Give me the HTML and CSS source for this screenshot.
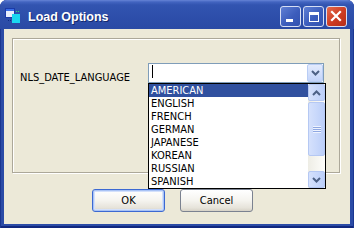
FILE: index.html
```html
<!DOCTYPE html>
<html lang="en">
<head>
    <meta charset="UTF-8">
    <title>Load Options</title>
    <link rel="stylesheet" href="styles.css">
</head>
<body>
    <div class="window">
        <div class="titlebar">
            <svg class="app-icon" width="16" height="16" viewBox="0 0 16 16">
                <rect x="0.5" y="0.5" width="9" height="9" fill="#e8eefc" stroke="#1b3aa8"/>
                <rect x="1" y="1" width="8" height="2" fill="#3a6fe8"/>
                <rect x="7" y="6" width="8" height="9" fill="#1ad8f0"/>
                <rect x="11" y="3" width="1" height="1" fill="#2ee06a"/>
                <rect x="13" y="3" width="1" height="1" fill="#2ee06a"/>
                <rect x="3" y="12" width="1" height="1" fill="#0b2a80"/>
                <rect x="5" y="12" width="1" height="1" fill="#0b2a80"/>
            </svg>
            <span class="title">Load Options</span>
            <div class="caption-buttons">
                <span class="cap min"><i></i></span>
                <span class="cap max"><i></i></span>
                <span class="cap close">
                    <svg width="21" height="21" viewBox="0 0 21 21">
                        <path d="M6 6 L14 14 M14 6 L6 14" stroke="#fff" stroke-width="2.2" stroke-linecap="square"/>
                    </svg>
                </span>
            </div>
        </div>
        <div class="client">
            <div class="group">
                <div class="field-row">
                    <label class="field-label">NLS_DATE_LANGUAGE</label>
                    <div class="combo">
                        <span class="caret"></span>
                        <span class="drop-btn">
                            <svg width="9" height="6" viewBox="0 0 9 6"><polyline points="1,1 4.5,4.5 8,1" fill="none" stroke="#4d6185" stroke-width="2"/></svg>
                        </span>
                        <div class="dropdown">
                            <ul class="options">
                                <li class="selected">AMERICAN</li>
                                <li>ENGLISH</li>
                                <li>FRENCH</li>
                                <li>GERMAN</li>
                                <li>JAPANESE</li>
                                <li>KOREAN</li>
                                <li>RUSSIAN</li>
                                <li>SPANISH</li>
                            </ul>
                            <div class="scrollbar">
                                <span class="sb-btn">
                                    <svg width="9" height="6" viewBox="0 0 9 6"><polyline points="1,5 4.5,1.5 8,5" fill="none" stroke="#4d6185" stroke-width="2"/></svg>
                                </span>
                                <span class="sb-thumb"><i></i></span>
                                <span class="sb-track"></span>
                                <span class="sb-btn">
                                    <svg width="9" height="6" viewBox="0 0 9 6"><polyline points="1,1 4.5,4.5 8,1" fill="none" stroke="#4d6185" stroke-width="2"/></svg>
                                </span>
                            </div>
                        </div>
                    </div>
                </div>
            </div>
            <div class="buttons">
                <button class="btn default">OK</button>
                <button class="btn">Cancel</button>
            </div>
        </div>
    </div>
</body>
</html>
```

FILE: styles.css
```css
body { margin: 0; background: #fff; font-family: "DejaVu Sans Condensed", "DejaVu Sans", sans-serif; font-stretch: condensed; font-size: 11px; color: #000; }

.window {
    width: 354px; height: 228px;
    display: flex; flex-direction: column;
    background: #2b4ba6;
    border-radius: 7px 7px 0 0;
    overflow: hidden;
    box-shadow: inset 1px 0 #1a3690, inset -1px 0 #1a3690, inset 0 -2px #11287e;
}

/* title bar */
.titlebar {
    height: 29px; flex: none;
    display: flex; align-items: flex-start;
    padding: 0 7px 0 5px;
    background: linear-gradient(#6684d6 0, #4264c0 2px, #3254b0 5px, #2d4eaa 60%, #2a4aa4 100%);
}
.app-icon { margin-top: 8px; margin-right: 7px; flex: none; }
.title {
    margin-top: 10px;
    font-family: "Liberation Sans", Arial, sans-serif;
    font-weight: bold; font-size: 12.5px; line-height: 15px;
    color: #fff;
    text-shadow: 1px 1px 0 #14286c;
}
.caption-buttons { margin-left: auto; margin-top: 6px; display: flex; gap: 2px; }
.cap {
    width: 21px; height: 21px; box-sizing: border-box;
    border: 1px solid #d6def4; border-radius: 3px;
    position: relative;
    background: linear-gradient(135deg, #5f7fd4 0, #3c5dbc 55%, #3252b0 100%);
}
.cap i { position: absolute; display: block; }
.min i { left: 5px; top: 12px; width: 7px; height: 3px; background: #fff; }
.max i { left: 5px; top: 5px; width: 10px; height: 10px; box-sizing: border-box; border: 1px solid #fff; border-top-width: 3px; }
.close { background: linear-gradient(135deg, #e56a4c 0, #cc3b22 55%, #b52e18 100%); }
.close svg { position: absolute; left: -1px; top: -1px; }

/* client */
.client {
    flex: 1;
    margin: 0 4px 4px;
    background: #ece9d8;
    padding: 9px 10px 0 8px;
}
.group {
    height: 135px; box-sizing: border-box;
    border: 1px solid #aca899;
    box-shadow: inset 1px 1px 0 #fff, 1px 1px 0 #fff;
    padding: 24px 0 0 7px;
}
.field-row { display: flex; align-items: flex-start; }
.field-label { width: 128px; margin-top: 8px; line-height: 13px; flex: none; }

.combo {
    position: relative;
    width: 176px; height: 20px; box-sizing: border-box;
    border: 1px solid #7f9db9;
    background: #fff;
    display: flex;
}
.caret { width: 1px; height: 13px; background: #000; margin: 1px 0 0 3px; }
.drop-btn {
    margin-left: auto;
    width: 16px; height: 18px; box-sizing: border-box;
    border: 1px solid #b9cdf5; border-radius: 2px;
    background: linear-gradient(#e3ebfd, #c3d4fa);
    display: flex; align-items: center; justify-content: center;
}

/* open list */
.dropdown {
    position: absolute; left: -1px; top: 19px;
    width: 178px; height: 106px; box-sizing: border-box;
    border: 1px solid #000;
    background: #fff;
    display: flex;
    z-index: 2;
}
.options { list-style: none; margin: 0; padding: 0; flex: 1; }
.options li { height: 13px; line-height: 13px; padding-left: 2px; white-space: nowrap; }
.options li.selected { background: #30509f; color: #fff; }

.scrollbar {
    width: 17px; flex: none;
    display: flex; flex-direction: column;
    background: linear-gradient(90deg, #eeede5, #fdfdfa);
}
.sb-btn, .sb-thumb {
    box-sizing: border-box;
    border: 1px solid #b5c8f3; border-radius: 2px;
    background: linear-gradient(90deg, #d5e1fc, #bccff9);
    display: flex; align-items: center; justify-content: center;
}
.sb-btn { height: 17px; }
.sb-thumb { height: 54px; margin-top: 1px; }
.sb-thumb i {
    display: block; width: 8px; height: 7px;
    background: repeating-linear-gradient(#eef3fe 0 1px, #8fa8e2 1px 2px);
}
.sb-track { flex: 1; }

/* buttons */
.buttons { display: flex; gap: 15px; margin-top: 16px; padding-left: 80px; }
.btn {
    width: 73px; height: 23px;
    font: inherit; color: #000;
    border: 1px solid #7b8290; border-radius: 3px;
    background: linear-gradient(#ffffff 0, #f5f4ef 50%, #e6e3da 85%, #d6d2c6 100%);
    padding: 0;
}
.btn.default {
    border-color: #3c69d2;
    box-shadow: inset 0 0 0 1px #a9c3f5, inset 0 0 0 2px #d3e0fb;
}
```
